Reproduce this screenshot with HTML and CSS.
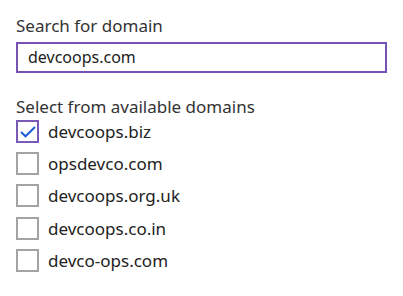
FILE: index.html
```html
<!DOCTYPE html>
<html lang="en">
<head>
    <meta charset="UTF-8">
    <title>Domain search</title>
    <link rel="stylesheet" href="styles.css">
</head>
<body>
    <div class="panel">
        <label class="field-label" for="domain">Search for domain</label>
        <div class="search-box" id="domain">devcoops.com</div>

        <div class="field-label list-label">Select from available domains</div>
        <ul class="domain-list">
            <li class="domain-item">
                <span class="check checked">
                    <svg width="16" height="12" viewBox="0 0 16 12"><polyline points="1,6 5.5,10.3 15,1" fill="none" stroke="#1c5cd8" stroke-width="2"/></svg>
                </span>
                devcoops.biz
            </li>
            <li class="domain-item"><span class="check"></span>opsdevco.com</li>
            <li class="domain-item"><span class="check"></span>devcoops.org.uk</li>
            <li class="domain-item"><span class="check"></span>devcoops.co.in</li>
            <li class="domain-item"><span class="check"></span>devco-ops.com</li>
        </ul>
    </div>
</body>
</html>
```

FILE: styles.css
```css
body {
    margin: 0;
    background: #fff;
    font-family: "Noto Sans", "Open Sans", sans-serif;
    color: #222;
}
.panel {
    padding: 18px 16px 0 16px;
}
.field-label {
    display: block;
    font-size: 17px;
    line-height: 16px;
    color: #333;
}
.search-box {
    box-sizing: border-box;
    width: 371px;
    height: 31px;
    margin-top: 8px;
    border: 2px solid #7552b3;
    padding: 0 10px;
    font-size: 16px;
    line-height: 27px;
}
.list-label {
    margin-top: 26px;
}
.domain-list {
    list-style: none;
    margin: 0;
    padding: 0;
}
.domain-item {
    display: flex;
    align-items: center;
    gap: 9px;
    height: 32.3px;
    font-size: 17px;
}
.check {
    box-sizing: border-box;
    width: 23px;
    height: 23px;
    border: 2px solid #a3a3a3;
    display: flex;
    align-items: center;
    justify-content: center;
}
.check.checked {
    border-color: #7a5ab8;
    padding-top: 1px;
}
```
